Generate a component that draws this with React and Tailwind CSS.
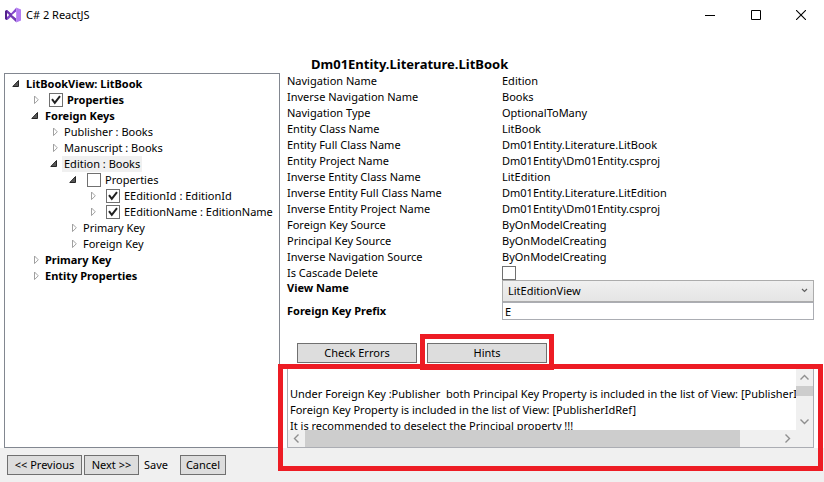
import { useState } from "react";

const tree = [
  {
    label: "LitBookView: LitBook",
    bold: true,
    open: true,
    children: [
      { label: "Properties", bold: true, check: true },
      {
        label: "Foreign Keys",
        bold: true,
        open: true,
        children: [
          { label: "Publisher : Books" },
          { label: "Manuscript : Books" },
          {
            label: "Edition : Books",
            open: true,
            selected: true,
            children: [
              {
                label: "Properties",
                check: false,
                open: true,
                children: [
                  { label: "EEditionId : EditionId", check: true },
                  { label: "EEditionName : EditionName", check: true },
                ],
              },
              { label: "Primary Key" },
              { label: "Foreign Key" },
            ],
          },
        ],
      },
      { label: "Primary Key", bold: true },
      { label: "Entity Properties", bold: true },
    ],
  },
];

const details = [
  ["Navigation Name", "Edition"],
  ["Inverse Navigation Name", "Books"],
  ["Navigation Type", "OptionalToMany"],
  ["Entity Class Name", "LitBook"],
  ["Entity Full Class Name", "Dm01Entity.Literature.LitBook"],
  ["Entity Project Name", "Dm01Entity\\Dm01Entity.csproj"],
  ["Inverse Entity Class Name", "LitEdition"],
  ["Inverse Entity Full Class Name", "Dm01Entity.Literature.LitEdition"],
  ["Inverse Entity Project Name", "Dm01Entity\\Dm01Entity.csproj"],
  ["Foreign Key Source", "ByOnModelCreating"],
  ["Principal Key Source", "ByOnModelCreating"],
  ["Inverse Navigation Source", "ByOnModelCreating"],
];

const hints = `
Under Foreign Key :Publisher  both Principal Key Property is included in the list of View: [PublisherId]
Foreign Key Property is included in the list of View: [PublisherIdRef]
It is recommended to deselect the Principal property !!!`;

function CheckBox({ id, label, checked }) {
  const [on, setOn] = useState(checked);
  return (
    <span className="relative block size-[14px] shrink-0">
      <input
        id={id}
        type="checkbox"
        aria-label={label}
        checked={on}
        onChange={(e) => setOn(e.target.checked)}
        className="peer block size-[14px] appearance-none border border-[#707070] bg-white"
      />
      <svg viewBox="0 0 14 14" className="pointer-events-none absolute inset-0 hidden size-[14px] peer-checked:block" aria-hidden="true">
        <path d="M3 6.2 L5.8 9.8 L11 3.2" fill="none" stroke="#212121" strokeWidth="2" />
      </svg>
    </span>
  );
}

function Node({ node, path }) {
  const [open, setOpen] = useState(Boolean(node.open));
  const hasCheck = node.check !== undefined;
  return (
    <li>
      <div className={"flex h-4 items-center " + (node.bold ? "font-bold" : "")}>
        <button
          type="button"
          aria-label={"Toggle " + node.label}
          onClick={() => setOpen(!open)}
          className="flex w-[19px] shrink-0 justify-start pl-1"
        >
          <svg viewBox="0 0 9 10" className="h-[10px] w-[9px]" aria-hidden="true">
            {open ? (
              <path d="M7.5 1.5 V7.5 H1.8 Z" fill="#595959" stroke="#262626" />
            ) : (
              <path d="M4.5 1 L8.3 4.8 L4.5 8.6 Z" fill="#fff" stroke="#a0a0a0" />
            )}
          </svg>
        </button>
        {hasCheck && (
          <span className="mx-1">
            <CheckBox id={path} checked={node.check} />
          </span>
        )}
        {hasCheck ? (
          <label htmlFor={path} className="whitespace-pre">{node.label}</label>
        ) : (
          <span className={"whitespace-pre " + (node.selected ? "-mx-0.5 bg-[#f0f0f0] px-0.5" : "")}>{node.label}</span>
        )}
      </div>
      {open && node.children && (
        <ul className="pl-[19px]">
          {node.children.map((c, i) => (
            <Node key={c.label} node={c} path={path + "-" + i} />
          ))}
        </ul>
      )}
    </li>
  );
}

function PushButton({ className, children }) {
  return (
    <button type="button" className={"h-5 border border-[#707070] bg-[#dddddd] text-center leading-[18px] " + className}>
      {children}
    </button>
  );
}

function Arrow({ d, label, className }) {
  return (
    <button type="button" aria-label={label} className={"flex size-[17px] shrink-0 items-center justify-center " + className}>
      <svg viewBox="0 0 9 9" className="size-[9px]" fill="none" stroke="#8f8f8f" strokeWidth="1.4" aria-hidden="true">
        <path d={d} />
      </svg>
    </button>
  );
}

function TitleBar() {
  return (
    <header className="flex h-[30px] items-center pl-[5px]">
      <svg viewBox="0 0 16 16" className="size-4" aria-hidden="true">
        <path d="M2 13 L0 12 V4 L2 3 L6 6.6 L11.2 .8 V5 L3 12.6 Z" fill="#8447cc" />
        <path d="M2 3 L11.2 11 V15.2 L2 6.5 Z" fill="#7239b3" />
        <path d="M0 4 L2 3 V13 L0 12 Z" fill="#52218a" />
        <path d="M2 6 L4.2 8 L2 10 Z" fill="#fff" />
        <path d="M6.8 8 L11.2 4.4 V11.6 Z" fill="#fff" />
        <path d="M11.2 .4 L16 2.4 V13.6 L11.2 15.6 Z" fill="#b37bf2" />
      </svg>
      <h1 className="flex-1 pl-[5px]">C# 2 ReactJS</h1>
      <div className="flex">
        <button type="button" aria-label="Minimize" className="flex h-7 w-[46px] items-center justify-center">
          <svg viewBox="0 0 10 10" className="size-[10px]"><path d="M0 5.5 H10" stroke="#000" /></svg>
        </button>
        <button type="button" aria-label="Maximize" className="flex h-7 w-[45px] items-center justify-center">
          <svg viewBox="0 0 10 10" className="size-[10px]"><path d="M.5 .5 H9.5 V9.5 H.5 Z" fill="none" stroke="#000" /></svg>
        </button>
        <button type="button" aria-label="Close" className="flex h-7 w-[46px] items-center justify-center">
          <svg viewBox="0 0 10 10" className="size-[10px]"><path d="M0 0 L10 10 M10 0 L0 10" stroke="#000" strokeWidth="1.1" /></svg>
        </button>
      </div>
    </header>
  );
}

export default function App() {
  const [prefix, setPrefix] = useState("E");
  return (
    <div className="flex min-h-screen flex-col bg-white font-['Noto_Sans','Open_Sans',sans-serif] text-[11px] leading-4 text-black">
      <TitleBar />
      <main className="flex flex-1 pr-[10px] pl-1">
        <nav aria-label="Model" className="mt-[43px] w-[276px] shrink-0 overflow-hidden border border-[#828790] pt-0.5 pl-0.5">
          <ul>
            {tree.map((n, i) => (
              <Node key={n.label} node={n} path={"node-" + i} />
            ))}
          </ul>
        </nav>

        <section className="flex min-w-0 flex-1 flex-col pt-[25px] pl-[7px]">
          <h2 className="pl-6 text-[13px] leading-[18px] font-bold">Dm01Entity.Literature.LitBook</h2>
          <dl>
            {details.map(([k, v]) => (
              <div key={k} className="flex h-4">
                <dt className="w-[215px] shrink-0">{k}</dt>
                <dd className="whitespace-nowrap">{v}</dd>
              </div>
            ))}
          </dl>
          <div className="flex h-[15px] items-center">
            <label htmlFor="cascade" className="w-[215px]">Is Cascade Delete</label>
            <CheckBox id="cascade" checked={false} />
          </div>
          <div className="flex">
            <label htmlFor="view" className="w-[215px] shrink-0 font-bold">View Name</label>
            <span className="relative block flex-1">
              <select
                id="view"
                className="block h-[22px] w-full appearance-none border border-[#acacac] bg-linear-to-b from-[#f0f0f0] to-[#e5e5e5] pl-[5px]"
              >
                <option>LitEditionView</option>
              </select>
              <svg viewBox="0 0 7 5" className="pointer-events-none absolute top-2 right-1.5 h-[5px] w-[7px]" aria-hidden="true">
                <path d="M1 1 L3.5 3.5 L6 1" fill="none" stroke="#606060" strokeWidth="1.2" />
              </svg>
            </span>
          </div>
          <div className="flex items-center">
            <label htmlFor="prefix" className="w-[215px] shrink-0 font-bold">Foreign Key Prefix</label>
            <input
              id="prefix"
              value={prefix}
              onChange={(e) => setPrefix(e.target.value)}
              className="h-[18px] min-w-0 flex-1 border border-[#abadb3] px-0.5"
            />
          </div>

          <div className="mt-[23px] flex gap-[10px] pl-[10px]">
            <PushButton className="w-[120px]">Check Errors</PushButton>
            <div className="relative">
              <PushButton className="w-[120px]">Hints</PushButton>
              <div className="pointer-events-none absolute -inset-x-[7px] -top-[9px] -bottom-[7px] z-10 border-5 border-[#ed1c24]" />
            </div>
          </div>

          <div className="relative mt-[5px] flex-1">
            <div className="flex h-full flex-col border border-[#abadb3]">
              <div className="flex flex-1">
                <textarea
                  readOnly
                  wrap="off"
                  aria-label="Hints"
                  value={hints}
                  rows={4}
                  className="block h-[61px] min-w-0 flex-1 resize-none overflow-hidden pt-px pl-0.5 outline-none"
                />
                <div className="flex w-[17px] flex-col bg-[#f0f0f0]">
                  <Arrow label="Scroll up" d="M.5 6.5 L4.5 2.5 L8.5 6.5" className="" />
                  <div className="h-[10px] bg-[#cdcdcd]" />
                  <Arrow label="Scroll down" d="M.5 2.5 L4.5 6.5 L8.5 2.5" className="mt-auto" />
                </div>
              </div>
              <div className="flex h-[17px] bg-[#f0f0f0] pr-[17px]">
                <Arrow label="Scroll left" d="M6.5 .5 L2.5 4.5 L6.5 8.5" className="" />
                <div className="flex flex-1">
                  <div className="w-11/12 bg-[#cdcdcd]" />
                </div>
                <Arrow label="Scroll right" d="M2.5 .5 L6.5 4.5 L2.5 8.5" className="" />
              </div>
            </div>
            <div className="pointer-events-none absolute -inset-x-[9px] -top-1 -bottom-[23px] z-10 border-5 border-[#ed1c24]" />
          </div>
        </section>
      </main>

      <footer className="flex h-[34px] gap-0.5 bg-[#f0f0f0] pt-[7px] pl-[7px]">
        <PushButton className="w-[75px]">&lt;&lt; Previous</PushButton>
        <PushButton className="w-[55px]">Next &gt;&gt;</PushButton>
        <button type="button" className="h-5 w-[37px] pl-[3px] text-left">Save</button>
        <PushButton className="w-[46px]">Cancel</PushButton>
      </footer>
    </div>
  );
}
